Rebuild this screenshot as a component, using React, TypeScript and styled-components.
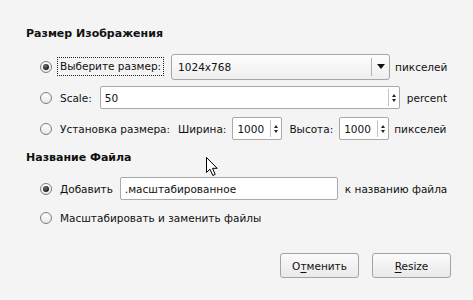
import styled, { createGlobalStyle } from 'styled-components';

const GlobalStyle = createGlobalStyle`
    html, body {
        margin: 0;
        padding: 0;
        background: #f4f4f4;
    }
    body {
        font-family: "DejaVu Sans", "Liberation Sans", sans-serif;
        font-size: 10.5px;
        color: #111;
    }
`

const Dialog = styled.div`
    position: relative;
    width: 473px;
    height: 300px;
    box-sizing: border-box;
    padding: 26px 22px 0 26px;
    background: #f4f4f4;
`

const SectionTitle = styled.div<{ $top: number }>`
    margin-top: ${p => p.$top}px;
    font-weight: bold;
    font-size: 11px;
    line-height: 16px;
    height: 16px;
`

const Rows = styled.div<{ $top: number }>`
    margin-top: ${p => p.$top}px;
    padding-left: 14px;
`

const Row = styled.div<{ $h: number }>`
    display: flex;
    align-items: center;
    height: ${p => p.$h}px;
    white-space: nowrap;
`

const RadioDot = styled.span<{ $checked?: boolean }>`
    position: relative;
    flex: none;
    width: 12px;
    height: 12px;
    box-sizing: border-box;
    border: 1px solid #7d7d7d;
    border-radius: 50%;
    background: linear-gradient(#ffffff, #e9e9e9);
    &::after {
        content: '';
        display: ${p => (p.$checked ? 'block' : 'none')};
        position: absolute;
        left: 2px;
        top: 2px;
        width: 6px;
        height: 6px;
        border-radius: 50%;
        background: radial-gradient(circle at 40% 35%, #777 0, #222 60%, #111 100%);
    }
`

const Label = styled.span<{ $gap?: number }>`
    margin-left: ${p => p.$gap ?? 8}px;
`

const FocusLabel = styled.span`
    margin-left: 5px;
    padding: 2px 2px 3px 2px;
    border: 1px dotted #222;
`

const Combo = styled.div<{ $gap: number; $w: number }>`
    display: flex;
    align-items: center;
    margin-left: ${p => p.$gap}px;
    width: ${p => p.$w}px;
    height: 26px;
    box-sizing: border-box;
    border: 1px solid #a6a6a6;
    border-radius: 3px;
    background: linear-gradient(#fdfdfd, #eeeeee);
`

const ComboText = styled.span`
    flex: 1;
    padding-left: 6px;
`

const ComboArrow = styled.span`
    display: flex;
    align-items: center;
    justify-content: center;
    width: 17px;
    height: 18px;
    border-left: 1px solid #b4b4b4;
    &::after {
        content: '';
        border-left: 4px solid transparent;
        border-right: 4px solid transparent;
        border-top: 5px solid #111;
    }
`

const Field = styled.div<{ $gap: number; $w: number }>`
    display: flex;
    align-items: center;
    margin-left: ${p => p.$gap}px;
    width: ${p => p.$w}px;
    height: 23px;
    box-sizing: border-box;
    border: 1px solid #a9a9a9;
    border-radius: 2px;
    background: #fff;
`

const FieldText = styled.span`
    flex: 1;
    padding-left: 4px;
`

const Spinner = styled.span`
    display: flex;
    flex-direction: column;
    align-items: center;
    justify-content: center;
    gap: 2px;
    width: 10px;
    height: 17px;
    border-left: 1px solid #c4c4c4;
    &::before, &::after {
        content: '';
        border-left: 2px solid transparent;
        border-right: 2px solid transparent;
    }
    &::before {
        border-bottom: 3px solid #222;
    }
    &::after {
        border-top: 3px solid #222;
    }
`

const Buttons = styled.div`
    display: flex;
    justify-content: flex-end;
    gap: 13px;
    margin-top: 21px;
`

const Button = styled.button`
    width: 79px;
    height: 25px;
    padding: 0;
    font: inherit;
    color: #111;
    border: 1px solid #a3a3a3;
    border-radius: 3px;
    background: linear-gradient(#fbfbfb, #e9e9e9);
    u {
        text-decoration: underline;
        text-underline-offset: 2px;
    }
`

const Cursor = styled.svg`
    position: absolute;
    left: 206px;
    top: 157px;
`

const SpinField = ({ gap, w, value }: { gap: number; w: number; value: string }) => (
    <Field $gap={gap} $w={w}>
        <FieldText>{value}</FieldText>
        <Spinner />
    </Field>
)

const App = () => {
    return (
        <Dialog>
            <GlobalStyle />
            <SectionTitle $top={0}>Размер Изображения</SectionTitle>
            <Rows $top={9}>
                <Row $h={31}>
                    <RadioDot $checked />
                    <FocusLabel>Выберите размер:</FocusLabel>
                    <Combo $gap={7} $w={219}>
                        <ComboText>1024x768</ComboText>
                        <ComboArrow />
                    </Combo>
                    <Label $gap={5}>пикселей</Label>
                </Row>
                <Row $h={31}>
                    <RadioDot />
                    <Label>Scale:</Label>
                    <SpinField gap={8} w={300} value="50" />
                    <Label $gap={7}>percent</Label>
                </Row>
                <Row $h={31}>
                    <RadioDot />
                    <Label>Установка размера:</Label>
                    <Label $gap={8}>Ширина:</Label>
                    <SpinField gap={6} w={50} value="1000" />
                    <Label $gap={7}>Высота:</Label>
                    <SpinField gap={6} w={50} value="1000" />
                    <Label $gap={5}>пикселей</Label>
                </Row>
            </Rows>

            <SectionTitle $top={6}>Название Файла</SectionTitle>
            <Rows $top={8}>
                <Row $h={29}>
                    <RadioDot $checked />
                    <Label>Добавить</Label>
                    <Field $gap={7} $w={218}>
                        <FieldText>.масштабированное</FieldText>
                    </Field>
                    <Label $gap={7}>к названию файла</Label>
                </Row>
                <Row $h={29}>
                    <RadioDot />
                    <Label>Масштабировать и заменить файлы</Label>
                </Row>
            </Rows>

            <Buttons>
                <Button>О<u>т</u>менить</Button>
                <Button><u>R</u>esize</Button>
            </Buttons>

            <Cursor width="14" height="20" viewBox="0 0 14 20">
                <path d="M0.5 0.5 L0.5 15.5 L4 12.2 L6.8 18.5 L9.2 17.4 L6.5 11.3 L11.2 11.3 Z" fill="#fff" stroke="#000" strokeWidth="1" strokeLinejoin="miter" />
            </Cursor>
        </Dialog>
    )
}

export default App
